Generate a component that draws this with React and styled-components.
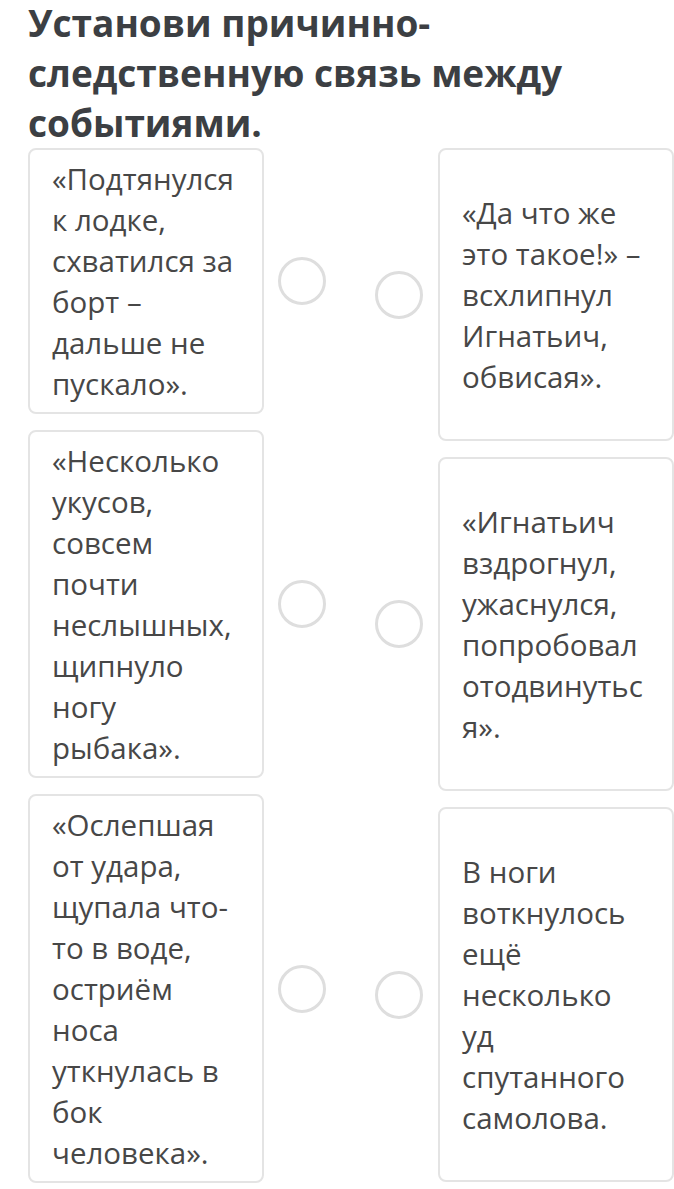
import styled, { createGlobalStyle } from "styled-components";

const GlobalStyle = createGlobalStyle`
    html, body {
        margin: 0;
        padding: 0;
        background: #FFFFFF;
        overflow: hidden;
    }
    body {
        font-family: "Open Sans", "Noto Sans", sans-serif;
    }
`;

const Page = styled.div`
    width: 674px;
    height: 1189px;
    padding-left: 28px;
    box-sizing: border-box;
    overflow: hidden;
`;

const Title = styled.h1`
    width: 620px;
    margin: -2px 0 0 0;
    font: normal normal 700 37px/50px "Open Sans", sans-serif;
    color: #3c3f43;
    letter-spacing: 0px;
`;

const Board = styled.div`
    display: grid;
    grid-template-columns: auto auto;
    column-gap: 49px;
    align-items: start;
`;

const Column = styled.div`
    display: flex;
    flex-direction: column;
    gap: 16px;
`;

const Item = styled.div`
    display: flex;
    flex-direction: row;
    align-items: center;
    gap: ${p => (p.$side === "left" ? "14px" : "15px")};
`;

const Card = styled.div`
    width: 236px;
    box-sizing: border-box;
    padding: ${p => (p.$side === "left" ? "8px 22px" : "42px 22px")};
    border: 2px solid #e4e4e4;
    border-radius: 8px;
    background: #FFFFFF;
`;

const CardText = styled.p`
    width: 183px;
    margin: 0;
    font: normal normal 400 29.5px/41px "Open Sans", sans-serif;
    color: #474747;
    overflow-wrap: anywhere;
    word-break: break-word;
`;

const Dot = styled.div`
    width: 48px;
    height: 48px;
    flex-shrink: 0;
    box-sizing: border-box;
    border: 3px solid #dedede;
    border-radius: 50%;
    background: #FFFFFF;
`;

const causes = [
    "«Подтянулся к лодке, схватился за борт – дальше не пускало».",
    "«Несколько укусов, совсем почти неслышных, щипнуло ногу рыбака».",
    "«Ослепшая от удара, щупала что-то в воде, остриём носа уткнулась в бок человека».",
];

const effects = [
    "«Да что же это такое!» – всхлипнул Игнатьич, обвисая».",
    "«Игнатьич вздрогнул, ужаснулся, попробовал отодвинутьс я».",
    "В ноги воткнулось ещё несколько уд спутанного самолова.",
];

function App() {
    return (
        <>
            <GlobalStyle />
            <Page>
                <Title>Установи причинно-следственную связь между событиями.</Title>
                <Board>
                    <Column>
                        {causes.map(text => (
                            <Item $side="left" key={text}>
                                <Card $side="left">
                                    <CardText>{text}</CardText>
                                </Card>
                                <Dot />
                            </Item>
                        ))}
                    </Column>
                    <Column>
                        {effects.map(text => (
                            <Item $side="right" key={text}>
                                <Dot />
                                <Card $side="right">
                                    <CardText>{text}</CardText>
                                </Card>
                            </Item>
                        ))}
                    </Column>
                </Board>
            </Page>
        </>
    );
}

export default App;
